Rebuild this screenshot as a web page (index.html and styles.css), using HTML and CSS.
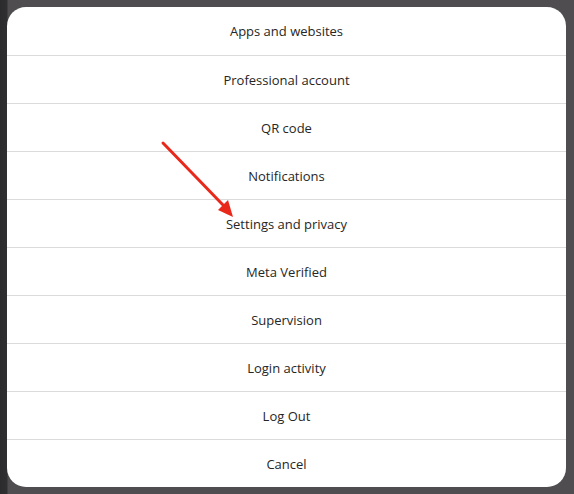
FILE: index.html
```html
<!DOCTYPE html>
<html>
<head>
<meta charset="utf-8">
<link rel="stylesheet" href="styles.css">
</head>
<body>
<div class="backdrop">
  <div class="dialog">
    <div class="item">Apps and websites</div>
    <div class="item">Professional account</div>
    <div class="item">QR code</div>
    <div class="item">Notifications</div>
    <div class="item">Settings and privacy</div>
    <div class="item">Meta Verified</div>
    <div class="item">Supervision</div>
    <div class="item">Login activity</div>
    <div class="item">Log Out</div>
    <div class="item">Cancel</div>
  </div>
  <svg class="arrow" width="574" height="494" viewBox="0 0 574 494">
    <line x1="163" y1="143" x2="224" y2="206" stroke="#e8281a" stroke-width="3" stroke-linecap="round"/>
    <polygon points="233,217 218,210 228,200" fill="#e8281a"/>
  </svg>
</div>
</body>
</html>
```
FILE: styles.css
```css
html, body {
  margin: 0;
  padding: 0;
}
body {
  width: 574px;
  height: 494px;
  overflow: hidden;
  background: #4f4d50;
  font-family: "Open Sans", "Noto Sans", sans-serif;
}
.backdrop {
  position: relative;
  width: 574px;
  height: 494px;
  padding: 7px 0 0 7px;
  box-sizing: border-box;
  background: linear-gradient(to right, #2b2a2c 0px, #2f2e30 7px, #4f4d50 8px);
}
.dialog {
  width: 559px;
  background: #ffffff;
  border-radius: 19px;
  overflow: hidden;
  display: flex;
  flex-direction: column;
}
.item {
  height: 48px;
  box-sizing: border-box;
  display: flex;
  align-items: center;
  justify-content: center;
  font-size: 13px;
  color: #262626;
  letter-spacing: 0;
}
.item + .item {
  border-top: 1px solid #dbdbdb;
}
.arrow {
  position: absolute;
  left: 0;
  top: 0;
  pointer-events: none;
}
```
